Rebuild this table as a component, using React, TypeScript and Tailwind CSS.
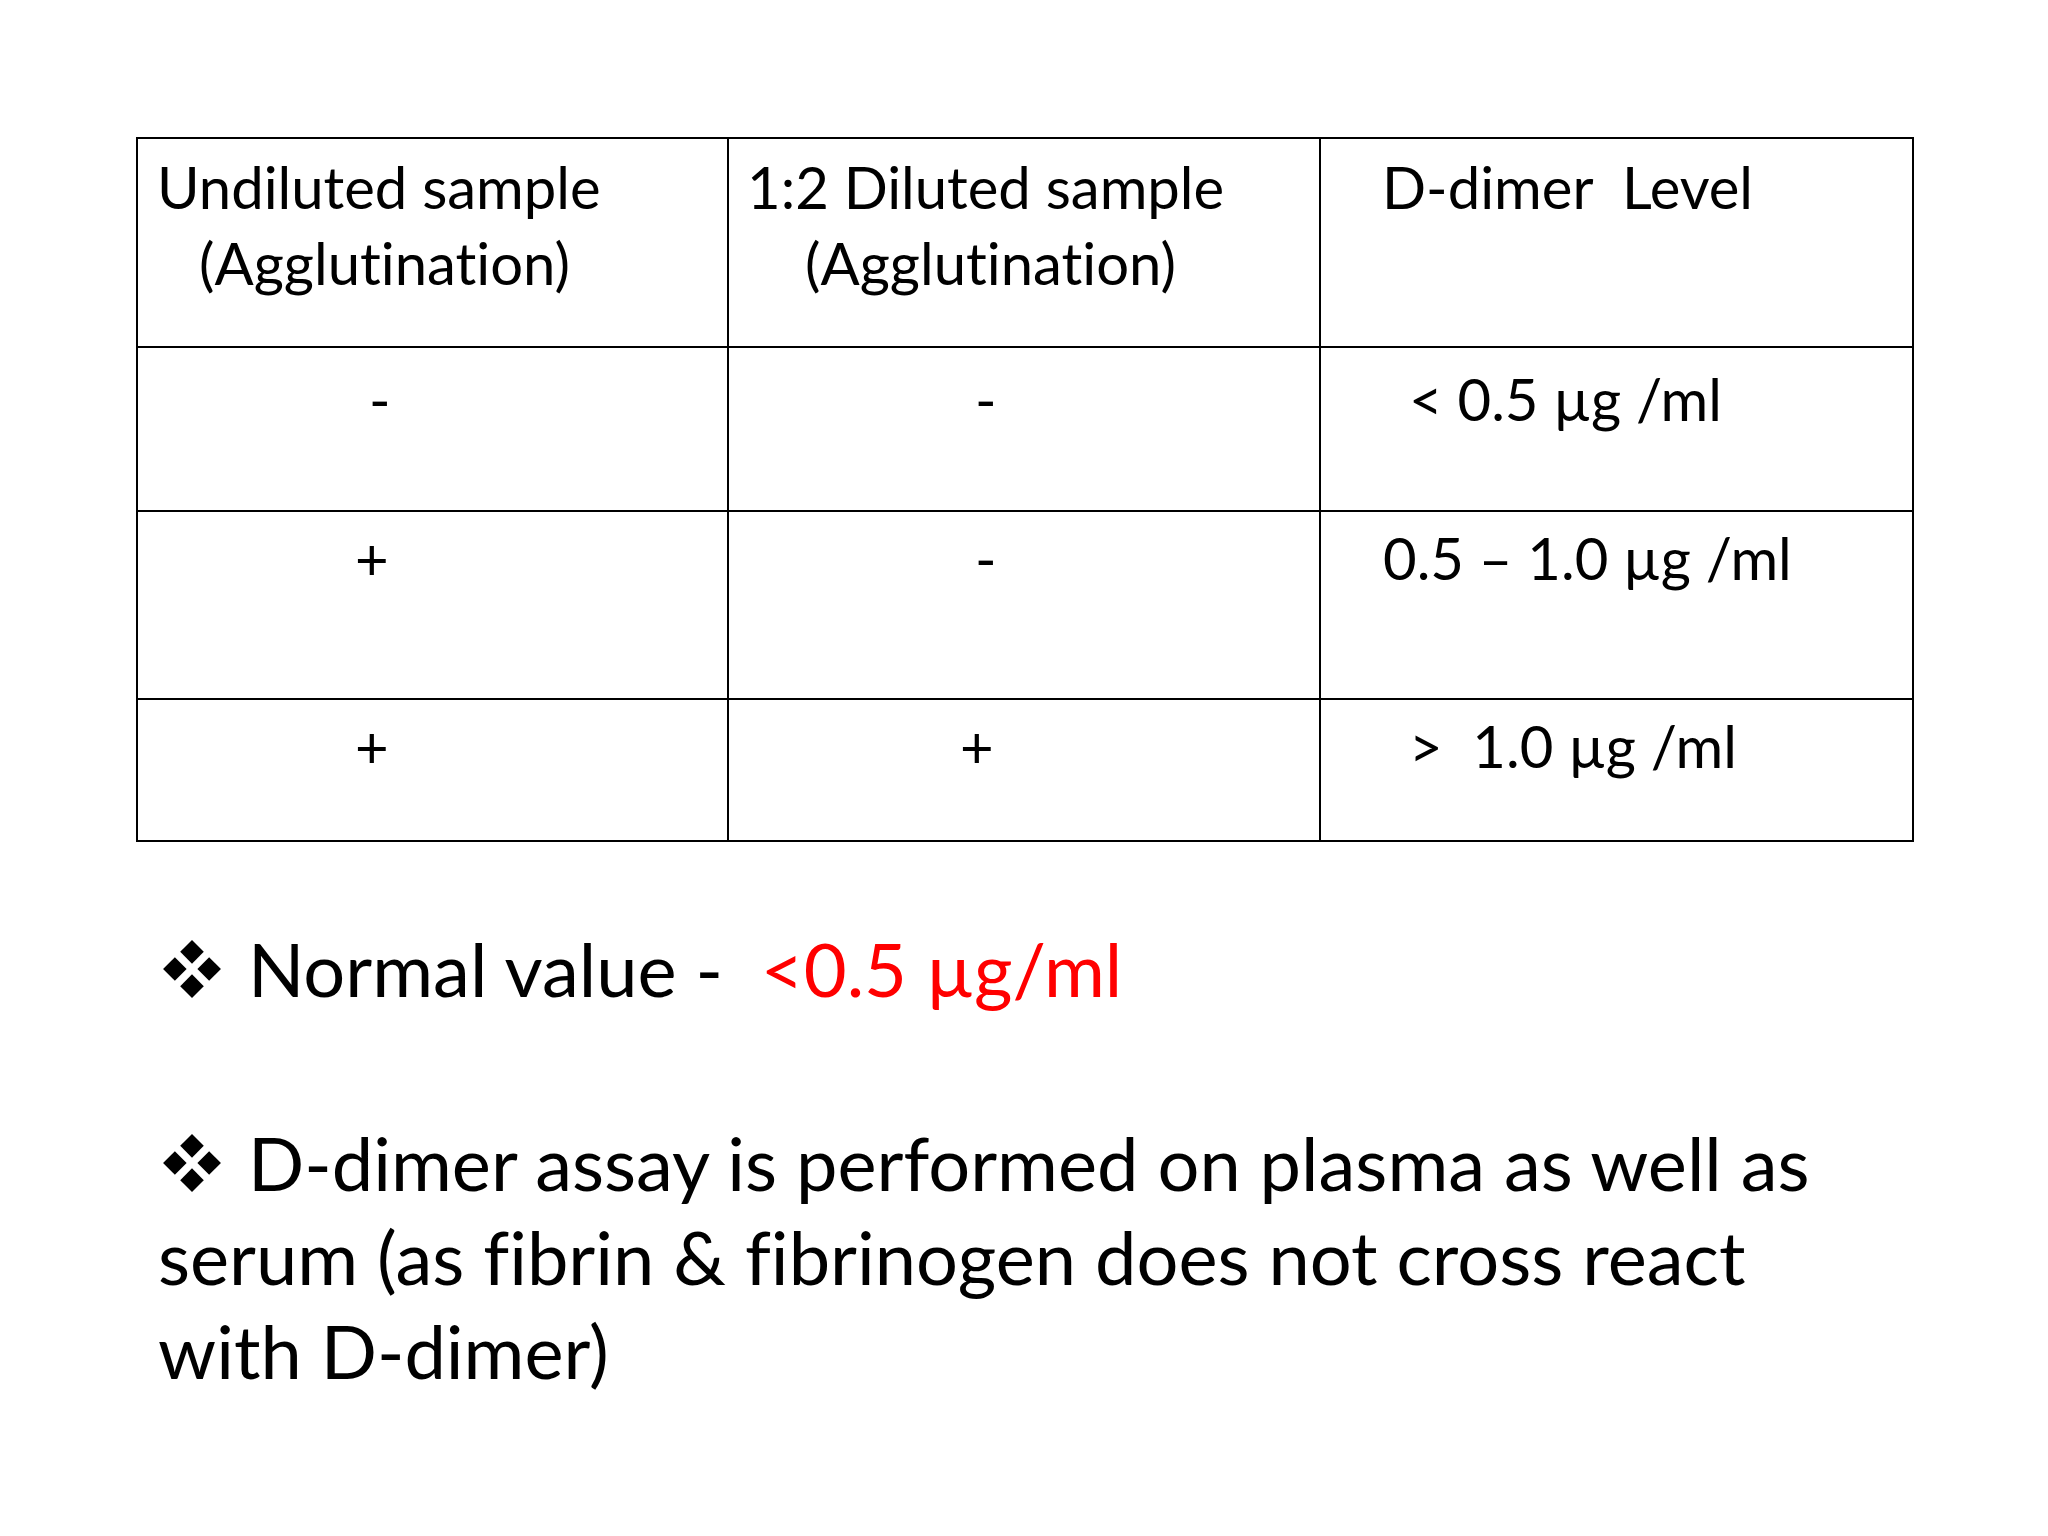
const font = { fontFamily: 'Lato, "Open Sans", sans-serif' };

// Four-diamond bullet (Wingdings ❖)
const DiamondBullet = () => (
    <svg width="60" height="60" viewBox="0 0 56 56" className="shrink-0">
        <polygon points="28,1 39,12 28,23 17,12" fill="#000" />
        <polygon points="12,17 23,28 12,39 1,28" fill="#000" />
        <polygon points="44,17 55,28 44,39 33,28" fill="#000" />
        <polygon points="28,33 39,44 28,55 17,44" fill="#000" />
    </svg>
);

const rows = [
    { a: '-', b: '-', c: '< 0.5 µg /ml', h: 'h-[164px]', pt: 'pt-[13px]', aPl: 'pl-[231px]', bPl: 'pl-[246px]', cPl: 'pl-[88px]' },
    { a: '+', b: '-', c: '0.5 – 1.0 µg /ml', h: 'h-[188px]', pt: 'pt-[8px]', aPl: 'pl-[217px]', bPl: 'pl-[246px]', cPl: 'pl-[62px]' },
    { a: '+', b: '+', c: '>  1.0 µg /ml', h: 'h-[142px]', pt: 'pt-[8px]', aPl: 'pl-[217px]', bPl: 'pl-[231px]', cPl: 'pl-[88px]' },
];

const App = () => {
    return (
        <div className="w-[2048px] h-[1536px] bg-white text-black overflow-hidden [font-variant-ligatures:none]" style={font}>
            <div className="pt-[137px] pl-[136px]">
                <table className="border-collapse table-fixed w-[1776px] text-[58px] leading-[76px]">
                    <colgroup>
                        <col className="w-[591px]" />
                        <col className="w-[592px]" />
                        <col className="w-[593px]" />
                    </colgroup>
                    <tbody>
                        {/* Header */}
                        <tr className="h-[209px]">
                            <td className="border-2 border-black align-top pt-[10px] pl-[19px] whitespace-pre">
                                <div>Undiluted sample</div>
                                <div className="pl-[42px]">(Agglutination)</div>
                            </td>
                            <td className="border-2 border-black align-top pt-[10px] pl-[18px] whitespace-pre">
                                <div>1:2 Diluted sample</div>
                                <div className="pl-[58px]">(Agglutination)</div>
                            </td>
                            <td className="border-2 border-black align-top pt-[10px] pl-[61px] whitespace-pre">
                                <div>D-dimer  Level</div>
                            </td>
                        </tr>

                        {rows.map((r, i) => (
                            <tr key={i} className={r.h}>
                                <td className={`border-2 border-black align-top whitespace-pre ${r.pt} ${r.aPl}`}>{r.a}</td>
                                <td className={`border-2 border-black align-top whitespace-pre ${r.pt} ${r.bPl}`}>{r.b}</td>
                                <td className={`border-2 border-black align-top whitespace-pre ${r.pt} ${r.cPl}`}>{r.c}</td>
                            </tr>
                        ))}
                    </tbody>
                </table>

                {/* Bullets */}
                <div className="pl-[22px] pt-[80px] text-[74px] leading-[94px]">
                    <div className="flex items-center gap-[26px] pl-[4px]">
                        <DiamondBullet />
                        <span className="whitespace-pre">
                            Normal value -  <span className="text-[#ff0000]">&lt;0.5 µg/ml</span>
                        </span>
                    </div>

                    <div className="mt-[100px]">
                        <div className="flex items-center gap-[26px] pl-[4px]">
                            <DiamondBullet />
                            <span>D-dimer assay is performed on plasma as well as</span>
                        </div>
                        <div>serum (as fibrin &amp; fibrinogen does not cross react</div>
                        <div>with D-dimer)</div>
                    </div>
                </div>
            </div>
        </div>
    );
};

export default App;
